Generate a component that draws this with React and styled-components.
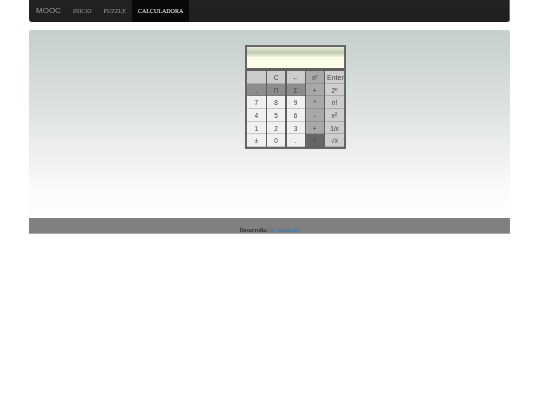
import React from "react";
import styled, { createGlobalStyle } from "styled-components";

const Global = createGlobalStyle`
  html, body { margin: 0; padding: 0; background: #fff; }
  body { font-family: "Liberation Serif", serif; }
`;

const Page = styled.div`
  width: 481px;
  margin-left: 29px;
  filter: blur(0.3px);
`;

const Navbar = styled.nav`
  display: flex;
  height: 22px;
  background: linear-gradient(#222, #1f1f1f);
  border-radius: 0 0 3px 3px;
  box-shadow: -1px 0 0 #666 inset;
  margin-bottom: 8px;
`;

const Brand = styled.span`
  font: 8px/22px "Liberation Sans", sans-serif;
  color: #999;
  padding: 0 6px 0 7px;
`;

const NavLink = styled.a`
  font-size: 6px;
  line-height: 22px;
  padding: 0 6px;
  color: ${p => (p.$active ? "#fff" : "#999")};
  background: ${p => (p.$active ? "#080808" : "transparent")};
`;

const Panel = styled.main`
  height: 188px;
  box-sizing: border-box;
  padding: 15px 0 0 216px;
  background: linear-gradient(#c5cfcb, #dfe4e2 45%, #fafbfb 85%, #fefefe);
  border-radius: 2px 2px 0 0;
  display: flex;
  align-items: flex-start;
`;

const Calculator = styled.div`
  width: 101px;
  height: 104px;
  box-sizing: border-box;
  border: 2px solid #666;
  background: #5e5e5e;
  display: flex;
  flex-direction: column;
`;

const DisplayTop = styled.div`
  height: 10px;
  background: linear-gradient(#e8ecda, #c4ccb2 55%, #eef2dc);
`;

const DisplayBottom = styled.div`
  height: 11px;
  background: #fbfde6;
`;

const Keys = styled.div`
  display: grid;
  grid-template-columns: 18.5px 18px 18px 17.5px 19px;
  grid-auto-rows: 12.667px;
  column-gap: 1.5px;
  margin-top: 3px;
  flex: 1;
`;

const Key = styled.div`
  font: ${p => (p.$wide ? "7px" : "6.5px")}/14px "Liberation Sans", sans-serif;
  text-align: ${p => (p.$wide ? "left" : "center")};
  padding-left: ${p => (p.$wide ? "2px" : "0")};
  white-space: nowrap;
  overflow: hidden;
  color: #444;
  background: ${p => p.$bg};
  box-shadow: 0 -1px 0 rgba(70,70,70,.25) inset;
`;

const Sup = styled.sup`
  font-size: 4.5px;
  line-height: 0;
  vertical-align: 2.5px;
`;

const LIGHT = "#f0f0f0", MID = "#cccccc", GREY = "#8c8c8c", OP = "#a8a8a8", EQ = "#666", SIDE = "#cdcdcd";

const rows = [
  [["", MID], ["C", MID], ["←", MID], [<>x<Sup>y</Sup></>, OP], ["Entero", SIDE]],
  [[",", GREY], ["Π", GREY], ["Σ", GREY], ["+", OP], [<>2<Sup>n</Sup></>, SIDE]],
  [["7", LIGHT], ["8", LIGHT], ["9", LIGHT], ["*", OP], ["n!", SIDE]],
  [["4", LIGHT], ["5", LIGHT], ["6", LIGHT], ["-", OP], [<>x<Sup>2</Sup></>, SIDE]],
  [["1", LIGHT], ["2", LIGHT], ["3", LIGHT], ["+", OP], ["1/x", SIDE]],
  [["±", LIGHT], ["0", LIGHT], [".", LIGHT], ["=", EQ], ["√x", SIDE]],
];

const Footer = styled.footer`
  height: 16px;
  background: #808080;
  box-shadow: 0 -1px 0 #aaa inset;
  font-size: 6px;
  font-weight: bold;
  line-height: 24px;
  text-align: center;
  color: #333;
  overflow: hidden;
`;

const Author = styled.a`
  color: #3d78b0;
`;

export default function App() {
  return (
    <Page>
      <Global />
      <Navbar>
        <Brand>MOOC</Brand>
        <NavLink>INICIO</NavLink>
        <NavLink>PUZZLE</NavLink>
        <NavLink $active>CALCULADORA</NavLink>
      </Navbar>
      <Panel>
        <Calculator>
          <DisplayTop />
          <DisplayBottom />
          <Keys>
            {rows.flat().map(([t, bg], i) => (
              <Key key={i} $bg={bg} $wide={t === "Entero"}>{t}</Key>
            ))}
          </Keys>
        </Calculator>
      </Panel>
      <Footer>
        Desarrollo: <Author>G. Rosendo</Author>
      </Footer>
    </Page>
  );
}
